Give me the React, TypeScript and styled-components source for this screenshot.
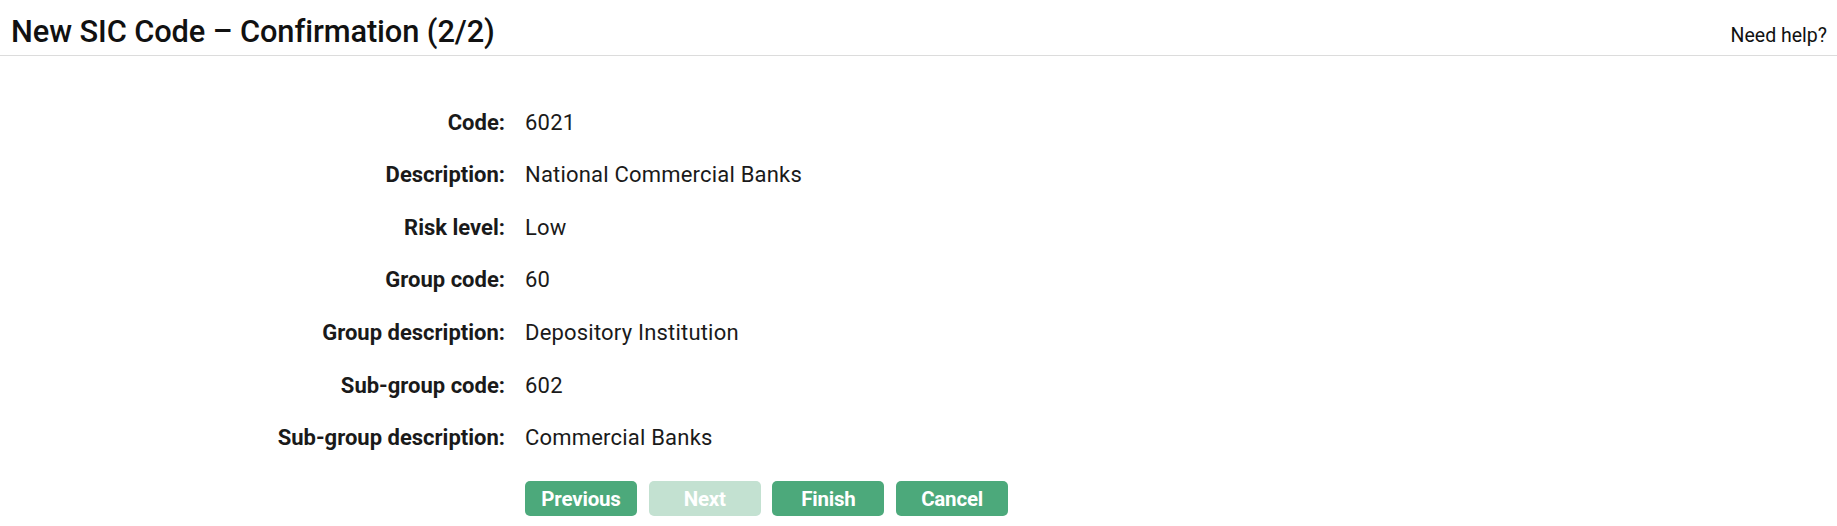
import React from "react";
import styled, { createGlobalStyle } from "styled-components";

const GlobalStyle = createGlobalStyle`
  html, body {
    margin: 0;
    padding: 0;
    background: #ffffff;
    font-family: Roboto, "Noto Sans", "Liberation Sans", sans-serif;
    color: #1c1c1c;
  }
  * { box-sizing: border-box; }
`;

const Page = styled.div`
  width: 100%;
`;

const Header = styled.header`
  display: flex;
  justify-content: space-between;
  align-items: baseline;
  padding: 14px 10px 5px 11px;
  border-bottom: 1px solid #dcdcdc;
`;

const Title = styled.h1`
  margin: 0;
  font-size: 30.8px;
  line-height: 36px;
  font-weight: 500;
  color: #111;
  letter-spacing: -0.1px;
`;

const HelpLink = styled.a`
  font-size: 19.5px;
  color: #111;
  text-decoration: none;
  cursor: pointer;
`;

const Form = styled.div`
  display: grid;
  grid-template-columns: 505px max-content;
  column-gap: 20px;
  row-gap: 20.67px;
  margin-top: 50.5px;
`;

const Label = styled.div`
  text-align: right;
  font-size: 22px;
  line-height: 32px;
  font-weight: 700;
  color: #1a1a1a;
  letter-spacing: 0;
`;

const Value = styled.div`
  font-size: 22px;
  line-height: 32px;
  font-weight: 400;
  color: #1a1a1a;
  letter-spacing: 0.2px;
`;

const Actions = styled.div`
  grid-column: 2;
  display: flex;
  gap: 11.7px;
  margin-top: 6px;
`;

const Button = styled.button<{ $disabled?: boolean }>`
  width: 112px;
  height: 35px;
  border: none;
  border-radius: 5px;
  background: ${(p) => (p.$disabled ? "#c3e1d1" : "#4ca97b")};
  color: #ffffff;
  font-family: Roboto, "Noto Sans", "Liberation Sans", sans-serif;
  font-size: 20.5px;
  font-weight: 700;
  letter-spacing: -0.2px;
  padding: 0;
  cursor: ${(p) => (p.$disabled ? "default" : "pointer")};
`;

const rows: [string, string][] = [
  ["Code:", "6021"],
  ["Description:", "National Commercial Banks"],
  ["Risk level:", "Low"],
  ["Group code:", "60"],
  ["Group description:", "Depository Institution"],
  ["Sub-group code:", "602"],
  ["Sub-group description:", "Commercial Banks"],
];

export default function App() {
  return (
    <Page>
      <GlobalStyle />
      <Header>
        <Title>New SIC Code – Confirmation (2/2)</Title>
        <HelpLink>Need help?</HelpLink>
      </Header>
      <Form>
        {rows.map(([label, value]) => (
          <React.Fragment key={label}>
            <Label>{label}</Label>
            <Value>{value}</Value>
          </React.Fragment>
        ))}
        <Actions>
          <Button>Previous</Button>
          <Button $disabled disabled>
            Next
          </Button>
          <Button>Finish</Button>
          <Button>Cancel</Button>
        </Actions>
      </Form>
    </Page>
  );
}
